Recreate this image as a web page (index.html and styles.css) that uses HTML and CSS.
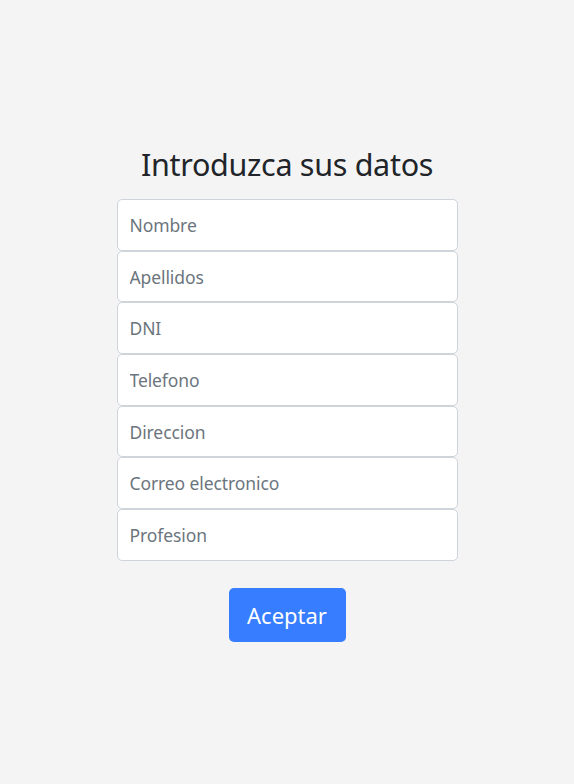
FILE: index.html
```html
<!DOCTYPE html>
<html lang="es">
<head>
<meta charset="utf-8">
<title>Introduzca sus datos</title>
<link rel="stylesheet" href="styles.css">
</head>
<body>
<main class="page">
  <form class="form">
    <h1 class="title">Introduzca sus datos</h1>
    <div class="fields">
      <input class="field" type="text" placeholder="Nombre">
      <input class="field" type="text" placeholder="Apellidos">
      <input class="field" type="text" placeholder="DNI">
      <input class="field" type="text" placeholder="Telefono">
      <input class="field" type="text" placeholder="Direccion">
      <input class="field" type="text" placeholder="Correo electronico">
      <input class="field" type="text" placeholder="Profesion">
    </div>
    <div class="actions">
      <button class="btn" type="button">Aceptar</button>
    </div>
  </form>
</main>
</body>
</html>
```

FILE: styles.css
```css
html, body {
  margin: 0;
  padding: 0;
  background: #f4f4f5;
  font-family: "Noto Sans", "Open Sans", sans-serif;
  color: #212529;
}

.page {
  display: flex;
  justify-content: center;
  padding-top: 145px;
}

.form {
  width: 341px;
  display: flex;
  flex-direction: column;
}

.title {
  margin: 0 0 16px;
  font-size: 30.5px;
  font-weight: 400;
  letter-spacing: -0.3px;
  line-height: 38px;
  text-align: center;
  color: #212529;
}

.fields {
  display: flex;
  flex-direction: column;
}

.field {
  box-sizing: border-box;
  height: 51.7px;
  width: 100%;
  margin: 0;
  padding: 0 12px;
  font-family: inherit;
  font-size: 17.5px;
  letter-spacing: -0.1px;
  color: #495057;
  background: #fff;
  border: 1px solid #ced4da;
  border-radius: 5px;
  outline: none;
}

.field::placeholder {
  color: #6c757d;
  opacity: 1;
}

.actions {
  display: flex;
  justify-content: center;
  margin-top: 27px;
}

.btn {
  box-sizing: border-box;
  width: 117px;
  height: 54px;
  padding: 0;
  font-family: inherit;
  font-size: 22px;
  color: #fff;
  background: #377dff;
  border: none;
  border-radius: 5px;
  cursor: pointer;
}
```
